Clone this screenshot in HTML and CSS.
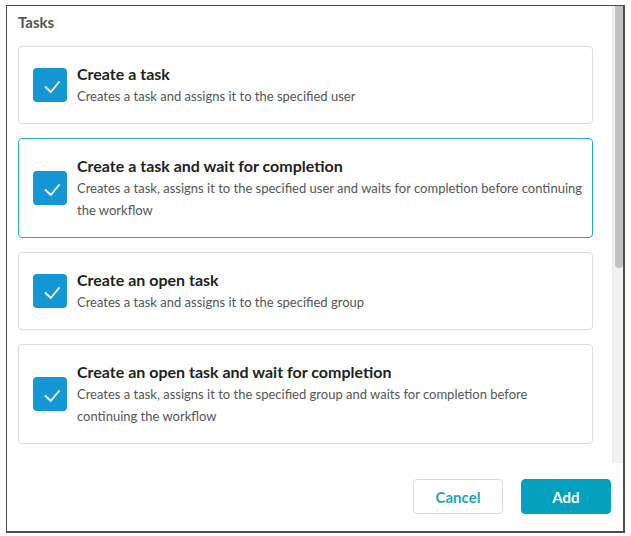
FILE: index.html
```html
<!DOCTYPE html>
<html>
<head>
<meta charset="utf-8">
<link rel="stylesheet" href="styles.css">
</head>
<body>
<div class="dialog">
  <div class="body">
    <div class="content">
      <h2 class="heading">Tasks</h2>
      <div class="card">
        <span class="check"><svg viewBox="0 0 34 34" width="34" height="34"><path d="M12.5 19 L17.8 24 L26 14" fill="none" stroke="#fff" stroke-width="1.8" stroke-linecap="round" stroke-linejoin="round"/></svg></span>
        <div class="text">
          <div class="title">Create a task</div>
          <div class="desc">Creates a task and assigns it to the specified user</div>
        </div>
      </div>
      <div class="card active">
        <span class="check"><svg viewBox="0 0 34 34" width="34" height="34"><path d="M12.5 19 L17.8 24 L26 14" fill="none" stroke="#fff" stroke-width="1.8" stroke-linecap="round" stroke-linejoin="round"/></svg></span>
        <div class="text">
          <div class="title">Create a task and wait for completion</div>
          <div class="desc">Creates a task, assigns it to the specified user and waits for completion before continuing the workflow</div>
        </div>
      </div>
      <div class="card">
        <span class="check"><svg viewBox="0 0 34 34" width="34" height="34"><path d="M12.5 19 L17.8 24 L26 14" fill="none" stroke="#fff" stroke-width="1.8" stroke-linecap="round" stroke-linejoin="round"/></svg></span>
        <div class="text">
          <div class="title">Create an open task</div>
          <div class="desc">Creates a task and assigns it to the specified group</div>
        </div>
      </div>
      <div class="card">
        <span class="check"><svg viewBox="0 0 34 34" width="34" height="34"><path d="M12.5 19 L17.8 24 L26 14" fill="none" stroke="#fff" stroke-width="1.8" stroke-linecap="round" stroke-linejoin="round"/></svg></span>
        <div class="text">
          <div class="title">Create an open task and wait for completion</div>
          <div class="desc">Creates a task, assigns it to the specified group and waits for completion before continuing the workflow</div>
        </div>
      </div>
    </div>
    <div class="scrollbar"><div class="thumb"></div></div>
  </div>
  <div class="footer">
    <button class="btn cancel">Cancel</button>
    <button class="btn add">Add</button>
  </div>
</div>
</body>
</html>
```

FILE: styles.css
```css
html, body {
  margin: 0;
  padding: 0;
  background: #fff;
}
body {
  font-family: "Lato", "Liberation Sans", sans-serif;
  width: 631px;
  height: 536px;
  overflow: hidden;
}
.dialog {
  margin: 5px 0 0 6px;
  width: 616px;
  height: 525px;
  border-style: solid;
  border-color: #4d4d4d;
  border-width: 1px 2px 2px 1px;
  display: flex;
  flex-direction: column;
  background: #fff;
}
.body {
  display: flex;
  height: 457px;
  flex: none;
}
.content {
  flex: 1;
  padding: 0 19px 0 11px;
  overflow: hidden;
}
.heading {
  margin: 0;
  height: 40px;
  line-height: 33px;
  font-size: 15px;
  font-weight: 700;
  color: #555;
}
.card {
  display: flex;
  align-items: center;
  gap: 10px;
  padding: 16px 7px 16px 14px;
  border: 1px solid #dcdcdc;
  border-radius: 4px;
  margin-bottom: 14px;
}
.card.active {
  border-color: #26a9c3;
}
.check {
  flex: none;
  width: 34px;
  height: 34px;
  border-radius: 4px;
  background: #1597d5;
  display: flex;
}
.text {
  flex: 1;
}
.title {
  font-size: 16px;
  font-weight: 700;
  color: #222;
  line-height: 22px;
}
.desc {
  font-size: 13px;
  color: #555;
  line-height: 22px;
}
.scrollbar {
  flex: none;
  width: 11px;
  background: #f1f1f1;
  border-left: 1px solid #e8e8e8;
  padding-left: 2px;
  box-sizing: border-box;
}
.thumb {
  height: 262px;
  background: #c1c1c1;
  border-radius: 0 0 4px 4px;
}
.footer {
  flex: 1;
  display: flex;
  justify-content: flex-end;
  align-items: flex-start;
  gap: 18px;
  padding: 16px 12px 0 0;
}
.btn {
  width: 90px;
  height: 35px;
  border-radius: 4px;
  font-family: inherit;
  font-size: 15px;
  font-weight: 700;
  cursor: pointer;
}
.cancel {
  background: #fff;
  border: 1px solid #d9d9d9;
  color: #20a3bf;
}
.add {
  background: #03a1bd;
  border: 1px solid #03a1bd;
  color: #fff;
}
```
